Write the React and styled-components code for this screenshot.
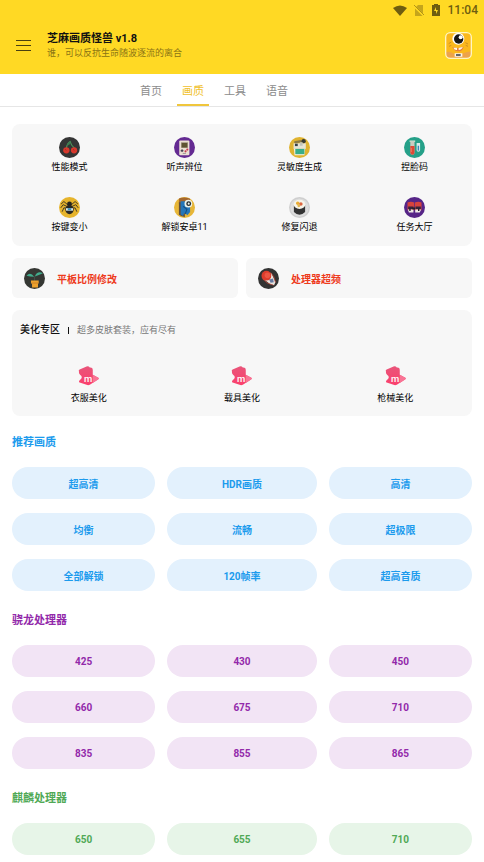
import React, { useState } from "react";
import styled, { createGlobalStyle } from "styled-components";

const GlobalStyle = createGlobalStyle`
  * {
    box-sizing: border-box;
  }

  body {
    margin: 0;
    background-color: #ffffff;
    color: #111111;
    font-family: Roboto, "Noto Sans CJK SC", sans-serif;
  }

  button {
    margin: 0;
    padding: 0;
    border: none;
    background: none;
    color: inherit;
    font-family: inherit;
    cursor: pointer;
  }
`;

// Styled Components
const Header = styled.header`
  background-color: #ffd924;
  padding-bottom: 4px;
`;

const StatusBar = styled.div`
  display: flex;
  align-items: center;
  justify-content: flex-end;
  gap: 7px;
  height: 20px;
  padding-right: 6px;
  color: #6e5d10;
  font-size: 12px;
  font-weight: 500;
`;

const Toolbar = styled.div`
  display: flex;
  align-items: center;
  height: 50px;
  padding: 0 12px 0 16px;
`;

const MenuButton = styled.button`
  display: flex;
  width: 15px;
  margin-right: 16px;
`;

const Heading = styled.div`
  flex: 1;
`;

const AppTitle = styled.h1`
  margin: 0;
  font-size: 11px;
  line-height: 16px;
  font-weight: 700;
`;

const Subtitle = styled.p`
  margin: 0;
  font-size: 9px;
  line-height: 12px;
  color: #8a7414;
`;

const Avatar = styled.button`
  display: flex;
  width: 27px;
  height: 27px;
`;

const TabBar = styled.nav`
  display: flex;
  justify-content: center;
  gap: 10px;
  height: 33px;
  padding-right: 56px;
  border-bottom: 1px solid #e6e6e6;
`;

const Tab = styled.button`
  padding: 0 5px;
  border-top: 2px solid transparent;
  border-bottom: 2px solid ${(props) => (props.$active ? "#f0c63c" : "transparent")};
  color: ${(props) => (props.$active ? "#f0bf2c" : "#8c8c8c")};
  font-size: 11px;
`;

const Content = styled.main`
  padding: 17px 12px 6px;
`;

const Card = styled.section`
  margin-bottom: 12px;
  border-radius: 8px;
  background-color: #f7f7f7;
`;

const ToolGrid = styled(Card)`
  display: grid;
  grid-template-columns: repeat(4, 1fr);
  row-gap: 23px;
  padding: 13px 0 12px;
`;

const Tool = styled.button`
  display: flex;
  flex-direction: column;
  align-items: center;
  gap: ${(props) => props.$gap || 2}px;
  font-size: 9px;
  line-height: 14px;
  color: #000000;
`;

const LinkRow = styled.div`
  display: grid;
  grid-template-columns: 1fr 1fr;
  gap: 8px;
  margin-bottom: 12px;
`;

const LinkCard = styled.button`
  display: flex;
  align-items: center;
  gap: 12px;
  height: 40px;
  padding: 0 12px;
  border-radius: 6px;
  background-color: #f7f7f7;
  color: #ee3a1c;
  font-size: 10px;
  font-weight: 700;
`;

const SkinCard = styled(Card)`
  padding: 12px 0 11px;
  margin-bottom: 19px;
`;

const SkinHeading = styled.div`
  display: flex;
  align-items: center;
  gap: 8px;
  padding: 0 8px;
  margin-bottom: 28px;
`;

const SkinTitle = styled.h2`
  margin: 0;
  font-size: 10px;
  line-height: 16px;
  font-weight: 500;
`;

const Divider = styled.span`
  width: 1px;
  height: 7px;
  background-color: #111111;
`;

const SkinNote = styled.span`
  font-size: 9px;
  line-height: 16px;
  color: #777777;
`;

const SkinGrid = styled.div`
  display: grid;
  grid-template-columns: repeat(3, 1fr);
`;

const Group = styled.section`
  color: ${(props) => props.$color};

  & + & {
    margin-top: 22px;
  }
`;

const GroupTitle = styled.h2`
  margin: 0 0 16px;
  font-size: 11px;
  line-height: 16px;
  font-weight: 700;
`;

const PillGrid = styled.div`
  display: grid;
  grid-template-columns: 22fr 23fr 22fr;
  gap: 14px 12px;
`;

const Pill = styled.button`
  height: 32px;
  border-radius: 16px;
  background-color: ${(props) => props.$background};
  font-size: 10px;
  font-weight: 700;
`;

const Badge = ({ background, children }) => (
  <svg width="21" height="21" viewBox="0 0 60 60" aria-hidden="true">
    <circle cx="30" cy="30" r="30" fill={background} />
    {children}
  </svg>
);

const CherryIcon = () => (
  <Badge background="#353535">
    <path d="M21 32 Q23 19 32 13 Q34 23 44 32" fill="none" stroke="#4d9a5a" strokeWidth="3" />
    <path d="M23 25 Q23 15 33 12 Q34 22 23 25Z" fill="#3e7c52" />
    <circle cx="21" cy="38" r="9" fill="#d8382c" />
    <circle cx="43" cy="38" r="9" fill="#d8382c" />
    <path d="M17 35 l4 3 M40 35 l4 3" stroke="#8d2823" strokeWidth="2" />
  </Badge>
);

const GameboyIcon = () => (
  <Badge background="#642a92">
    <rect x="15" y="10" width="29" height="42" rx="3" fill="#eadfd2" />
    <rect x="20" y="15" width="20" height="16" fill="#a49a86" />
    <rect x="22" y="17" width="16" height="13" fill="#5d5432" />
    <path d="M19 39 h8 M23 35 v8" stroke="#373445" strokeWidth="3" />
    <circle cx="38" cy="36" r="3" fill="#c83a50" />
    <circle cx="33" cy="41" r="3" fill="#c83a50" />
    <path d="M25 47 h9" stroke="#837b7b" strokeWidth="2" />
  </Badge>
);

const CameraIcon = () => (
  <Badge background="#e0b32f">
    <path d="M15 12 L39 8 L39 15 L15 18Z" fill="#8d7944" />
    <rect x="13" y="18" width="35" height="16" fill="#e6e4d6" />
    <rect x="17" y="19" width="8" height="7" fill="#38414a" />
    <circle cx="42" cy="12" r="6" fill="#363a34" />
    <path d="M31 15 h8 v10 h-8z" fill="#c1c3b8" />
    <path d="M14 34 h32 l-2 18 h-28z" fill="#f3efdc" />
    <rect x="18" y="34" width="26" height="15" fill="#39ad89" />
  </Badge>
);

const TubeIcon = () => (
  <Badge background="#25a088">
    <path d="M16 12 h16" stroke="#d9e2d6" strokeWidth="4" />
    <path d="M18 13 h12 v32 a6 6 0 0 1 -12 0z" fill="#c9ccc0" />
    <path d="M18 26 h12 v19 a6 6 0 0 1 -12 0z" fill="#dc4936" />
    <path d="M21 31 v12" stroke="#f18a71" strokeWidth="2" />
    <path d="M36 17 h10 v20 a5 5 0 0 1 -10 0z" fill="#d7ebe9" />
    <path d="M39 25 h4 v14 h-4z" fill="#3789b6" />
  </Badge>
);

const SpiderIcon = () => (
  <Badge background="#e6b42c">
    <path
      d="M27 24 L14 13 L6 20 M25 28 L12 22 L5 31 M25 32 L14 31 L9 42 M33 24 L46 13 L54 20 M35 28 L48 22 L55 31 M35 32 L46 31 L51 42"
      fill="none"
      stroke="#302b23"
      strokeWidth="2.5"
    />
    <circle cx="30" cy="20" r="7" fill="#25241f" />
    <ellipse cx="30" cy="36" rx="12" ry="13" fill="#292823" />
    <path d="M20 32 h20 v7 h-20z" fill="#e6ece4" />
    <rect x="25" y="32" width="10" height="6" fill="#3891bd" />
  </Badge>
);

const ParrotIcon = () => (
  <Badge background="#e7b638">
    <path d="M14 4 Q30 -2 46 5 V19 H14Z" fill="#a5682d" />
    <path d="M14 15 h17 v42 q-10 -1 -17 -6z" fill="#61503e" />
    <path d="M19 12 h27 v31 l-8 9 l-7 -7 l-6 9 l-6 -5z" fill="#2576b8" />
    <path d="M26 27 l11 8 l-5 14" fill="none" stroke="#154e82" strokeWidth="3" />
    <circle cx="41" cy="19" r="11" fill="#edf3ea" />
    <circle cx="42" cy="19" r="7" fill="#252b2c" />
    <circle cx="42" cy="19" r="3" fill="#edf3ea" />
  </Badge>
);

const SushiIcon = () => (
  <Badge background="#cfcfcf">
    <circle cx="30" cy="30" r="26" fill="#dddddd" />
    <path d="M14 22 v21 q16 16 32 0 v-21z" fill="#333333" />
    <ellipse cx="30" cy="21" rx="17" ry="13" fill="#f6f4e9" />
    <circle cx="25" cy="18" r="5" fill="#e9ad35" />
    <circle cx="34" cy="20" r="5" fill="#dc653f" />
    <circle cx="28" cy="25" r="4" fill="#e0b54e" />
  </Badge>
);

const TruckIcon = () => (
  <Badge background="#562587">
    <path d="M10 16 q10 -5 19 0 v22 h-19z M31 16 q10 -5 19 0 v22 h-19z" fill="#d7433d" />
    <path d="M12 27 h15 v8 h-15z M33 27 h15 v8 h-15z" fill="#38243d" />
    <path d="M11 36 h16 v8 h-13z M32 36 h17 l-4 8 h-13z" fill="#eee9e6" />
    <path d="M15 33 h4 v7 h-4z M24 30 h8 v6 h-8z M40 33 h4 v7 h-4z" fill="#211f2a" />
  </Badge>
);

const PlantIcon = () => (
  <Badge background="#353733">
    <path d="M30 38 V24" stroke="#435c50" strokeWidth="2" />
    <path d="M7 22 Q18 9 29 25 Q17 25 7 22Z M31 24 Q38 7 54 15 Q42 20 31 24Z" fill="#42ad8d" />
    <path d="M20 36 h22 v8 h-2 v12 h-17 v-12 h-3z" fill="#eda12d" />
    <path d="M21 43 h20" stroke="#bd7726" strokeWidth="2" />
  </Badge>
);

const BoosterIcon = () => (
  <Badge background="#333333">
    <path d="M14 30 L38 14 L50 40 L46 49 L34 46Z" fill="#e9e6df" />
    <circle cx="24" cy="22" r="14" fill="#dd3c2c" />
    <circle cx="27" cy="21" r="8" fill="#ed5542" />
    <path d="M32 33 L43 30 L45 41 L36 42Z" fill="#667aa2" />
    <path d="M12 30 Q26 47 44 49 M36 13 Q48 23 50 42" fill="none" stroke="#c04435" strokeWidth="2" />
  </Badge>
);

const SkinIcon = () => (
  <svg width="21" height="20" viewBox="0 0 64 60" aria-hidden="true">
    <defs>
      <linearGradient id="skinPink" x1="0" y1="0" x2="0" y2="1">
        <stop offset="0" stopColor="#e9557a" />
        <stop offset="1" stopColor="#fb3f6c" />
      </linearGradient>
    </defs>
    <path
      d="M3 16 Q1 12 5 10 L26 1 Q32 -1 36 4 Q45 3 45 11 V26 L62 35 Q65 38 61 41 L36 57 Q31 60 26 57 L5 50 Q1 48 5 43 Q17 34 7 27 Q2 23 3 16Z"
      fill="url(#skinPink)"
    />
    <path d="M45 26 L62 35 Q65 38 61 41 L45 51Z" fill="#f97495" />
    <text x="31" y="48" textAnchor="middle" fontFamily="Roboto, sans-serif" fontSize="29" fontWeight="500" fill="#ffffff">
      m
    </text>
  </svg>
);

const MonsterLogo = () => (
  <svg width="27" height="27" viewBox="0 0 81 81" aria-hidden="true">
    <defs>
      <clipPath id="logoClip">
        <rect x="2" y="2" width="77" height="77" rx="14" />
      </clipPath>
    </defs>
    <g clipPath="url(#logoClip)">
      <rect width="81" height="81" fill="#fbb81c" />
      <path d="M0 62 Q12 56 24 64 T55 64 T81 60 V81 H0Z" fill="#eda34a" />
      <path d="M11 35 l8 -5 M12 43 l7 -3 M61 32 l8 4 M62 40 l7 3" stroke="#b97a22" strokeWidth="2" />
      <path d="M22 45 Q40 52 56 44 Q53 58 39 58 Q26 57 22 45Z" fill="#e5813a" />
      <path d="M25 47 h11 v7 q-8 1 -11 -7z M41 48 l12 -3 q-2 8 -12 9z" fill="#fff5e5" />
      <circle cx="40" cy="20" r="18" fill="#ffffff" />
      <circle cx="41" cy="21" r="14" fill="#171717" />
      <circle cx="47" cy="16" r="6" fill="#ffffff" />
      <path d="M29 64 h23 v10 h-23z" fill="#f9f5ed" />
      <path d="M33 69 h14" stroke="#35363d" strokeWidth="5" />
    </g>
    <rect x="2" y="2" width="77" height="77" rx="14" fill="none" stroke="#fff5c2" strokeWidth="4" />
  </svg>
);

const tools = [
  { label: "性能模式", Icon: CherryIcon },
  { label: "听声辨位", Icon: GameboyIcon },
  { label: "灵敏度生成", Icon: CameraIcon },
  { label: "捏脸码", Icon: TubeIcon },
  { label: "按键变小", Icon: SpiderIcon },
  { label: "解锁安卓11", Icon: ParrotIcon },
  { label: "修复闪退", Icon: SushiIcon },
  { label: "任务大厅", Icon: TruckIcon },
];

const skins = ["衣服美化", "载具美化", "枪械美化"];

const groups = [
  {
    title: "推荐画质",
    color: "#1c9bed",
    background: "#e3f1fd",
    items: ["超高清", "HDR画质", "高清", "均衡", "流畅", "超极限", "全部解锁", "120帧率", "超高音质"],
  },
  {
    title: "骁龙处理器",
    color: "#9229aa",
    background: "#f2e4f5",
    items: ["425", "430", "450", "660", "675", "710", "835", "855", "865"],
  },
  {
    title: "麒麟处理器",
    color: "#50a956",
    background: "#e7f5e8",
    items: ["650", "655", "710"],
  },
];

const App = () => {
  const [activeTab, setActiveTab] = useState("画质");

  return (
    <>
      <GlobalStyle />
      <Header>
        <StatusBar>
          <svg width="14" height="11" viewBox="0 0 14 11" aria-hidden="true">
            <path d="M0 3 Q7 -2 14 3 L7 11Z" fill="currentColor" />
          </svg>
          <svg width="10" height="11" viewBox="0 0 10 11" aria-hidden="true">
            <path d="M4 0 H9 V11 H1 V3Z" fill="#c5a51b" />
            <path d="M0 1 L10 11" stroke="#ffd924" strokeWidth="2" />
            <path d="M0 0 L10 10" stroke="#b39317" />
          </svg>
          <svg width="10" height="12" viewBox="0 0 10 12" aria-hidden="true">
            <path d="M3 0 H7 V1 H9 V12 H1 V1 H3Z" fill="currentColor" />
            <path d="M5 3 L3 7 H5 V10 L7 6 H5Z" fill="#ffd924" />
          </svg>
          <span>11:04</span>
        </StatusBar>
        <Toolbar>
          <MenuButton aria-label="菜单">
            <svg width="15" height="13" viewBox="0 0 15 13" aria-hidden="true">
              <path d="M0 1.5 H15 M0 6.5 H15 M0 11.5 H15" stroke="#4a400f" />
            </svg>
          </MenuButton>
          <Heading>
            <AppTitle>芝麻画质怪兽 v1.8</AppTitle>
            <Subtitle>谁，可以反抗生命随波逐流的离合</Subtitle>
          </Heading>
          <Avatar aria-label="头像">
            <MonsterLogo />
          </Avatar>
        </Toolbar>
      </Header>

      <TabBar>
        {["首页", "画质", "工具", "语音"].map((tab) => (
          <Tab key={tab} $active={tab === activeTab} onClick={() => setActiveTab(tab)}>
            {tab}
          </Tab>
        ))}
      </TabBar>

      <Content>
        <ToolGrid>
          {tools.map(({ label, Icon }) => (
            <Tool key={label}>
              <Icon />
              {label}
            </Tool>
          ))}
        </ToolGrid>

        <LinkRow>
          <LinkCard>
            <PlantIcon />
            平板比例修改
          </LinkCard>
          <LinkCard>
            <BoosterIcon />
            处理器超频
          </LinkCard>
        </LinkRow>

        <SkinCard>
          <SkinHeading>
            <SkinTitle>美化专区</SkinTitle>
            <Divider />
            <SkinNote>超多皮肤套装，应有尽有</SkinNote>
          </SkinHeading>
          <SkinGrid>
            {skins.map((label) => (
              <Tool key={label} $gap={5}>
                <SkinIcon />
                {label}
              </Tool>
            ))}
          </SkinGrid>
        </SkinCard>

        {/* Preset groups */}
        {groups.map((group) => (
          <Group key={group.title} $color={group.color}>
            <GroupTitle>{group.title}</GroupTitle>
            <PillGrid>
              {group.items.map((item) => (
                <Pill key={item} $background={group.background}>
                  {item}
                </Pill>
              ))}
            </PillGrid>
          </Group>
        ))}
      </Content>
    </>
  );
};

export default App;
